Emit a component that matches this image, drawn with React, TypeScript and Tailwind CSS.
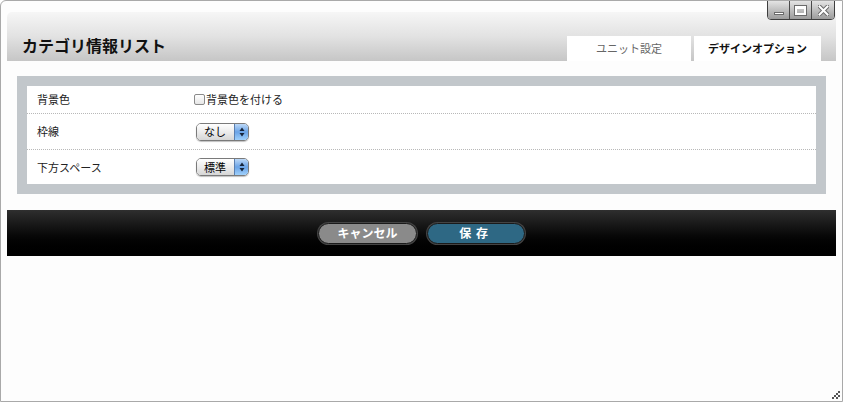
import React from 'react';

const font = { fontFamily: '"Noto Sans CJK JP", "Liberation Sans", sans-serif' };

function AquaSelect({ label }: { label: string }) {
  return (
    <div className="flex h-[18px] w-[53px] overflow-hidden rounded-[5px] border border-[#7a7a7a] shadow-[0_1px_1px_rgba(0,0,0,0.25)]">
      <div className="flex flex-1 items-center bg-gradient-to-b from-[#ffffff] via-[#ececec] to-[#d6d6d6] pl-[7px] text-[11px] leading-none text-black">
        {label}
      </div>
      <div className="flex w-[14px] flex-col items-center justify-center border-l border-[#5a7fb0] bg-gradient-to-b from-[#bcd8f7] via-[#6aa3e6] to-[#9fd0fb]">
        <svg width="6" height="10" viewBox="0 0 6 10">
          <path d="M3 0.5 L5.5 4 L0.5 4 Z" fill="#15243a" />
          <path d="M3 9.5 L5.5 6 L0.5 6 Z" fill="#15243a" />
        </svg>
      </div>
    </div>
  );
}

function WinButton({ children }: { children: React.ReactNode }) {
  return (
    <div className="flex h-[18px] w-[22px] items-center justify-center border-r border-[#4a4a4a] bg-gradient-to-b from-[#e4e4e4] to-[#9c9c9c] last:border-r-0">
      {children}
    </div>
  );
}

export default function App() {
  return (
    <div className="relative h-[402px] w-[843px] overflow-hidden rounded-tl-[6px] border border-[#a9a9a9] bg-[#fdfdfd]" style={font}>
      {/* window controls */}
      <div className="absolute right-[7px] top-[-1px] flex overflow-hidden rounded-b-[4px] border border-[#3e3e3e]">
        <WinButton>
          <div className="mt-[7px] h-[3px] w-[10px] border border-[#6b6b6b] bg-white" />
        </WinButton>
        <WinButton>
          <div className="h-[9px] w-[11px] border-2 border-t-[3px] border-white outline outline-1 outline-[#6b6b6b]" />
        </WinButton>
        <WinButton>
          <svg width="11" height="11" viewBox="0 0 11 11">
            <path d="M1.5 1.5 L9.5 9.5 M9.5 1.5 L1.5 9.5" stroke="#6b6b6b" strokeWidth="4" strokeLinecap="square" />
            <path d="M1.5 1.5 L9.5 9.5 M9.5 1.5 L1.5 9.5" stroke="#ffffff" strokeWidth="2" strokeLinecap="square" />
          </svg>
        </WinButton>
      </div>

      <div className="flex flex-col px-[6px] pt-[11px]">
        {/* header */}
        <div className="flex h-[49px] items-end justify-between rounded-tl-[5px] bg-gradient-to-b from-[#f6f6f6] via-[#e2e2e2] to-[#c6c6c6] pr-[15px]">
          <div className="self-center pl-[15px] pt-[16px] text-[16px] font-bold leading-none text-[#111]">
            カテゴリ情報リスト
          </div>
          <div className="flex gap-[3px]">
            <div className="flex h-[25px] w-[124px] items-center justify-center bg-white text-[11px] text-[#666]">
              ユニット設定
            </div>
            <div className="flex h-[25px] w-[127px] items-center justify-center bg-white text-[11px] font-bold text-[#111]">
              デザインオプション
            </div>
          </div>
        </div>

        {/* settings panel */}
        <div className="mx-[10px] mt-[15px] bg-[#c2c7cb] p-[10px]">
          <div className="flex flex-col bg-white text-[11px] text-[#222]">
            <div className="flex h-[28px] items-center border-b border-dotted border-[#b8b8b8] px-[10px]">
              <div className="w-[157px]">背景色</div>
              <label className="flex items-center">
                <span className="mr-[1px] h-[11px] w-[11px] rounded-[2px] border border-[#8a8a8a] bg-gradient-to-b from-white to-[#e6e6e6]" />
                背景色を付ける
              </label>
            </div>
            <div className="flex h-[36px] items-center border-b border-dotted border-[#b8b8b8] px-[10px]">
              <div className="w-[159px]">枠線</div>
              <AquaSelect label="なし" />
            </div>
            <div className="flex h-[34px] items-center px-[10px]">
              <div className="w-[159px]">下方スペース</div>
              <AquaSelect label="標準" />
            </div>
          </div>
        </div>

        {/* footer */}
        <div className="mt-[16px] flex h-[46px] items-center justify-center gap-[10px] bg-gradient-to-b from-[#2f2f2f] to-[#000000]">
          <button className="flex h-[21px] w-[99px] items-center justify-center rounded-full border border-[#1a1a1a] bg-[#8a8a8a] text-[12px] font-bold text-white shadow-[0_0_0_1px_#444]">
            キャンセル
          </button>
          <button className="flex h-[21px] w-[98px] items-center justify-center rounded-full border border-[#1a1a1a] bg-[#2e6884] text-[12px] font-bold tracking-[0.4em] text-white shadow-[0_0_0_1px_#444]">
            保存
          </button>
        </div>
      </div>

      {/* resize grip */}
      <svg className="absolute bottom-[2px] right-[2px]" width="8" height="8" viewBox="0 0 8 8">
        <rect x="6" y="0" width="2" height="2" fill="#555" />
        <rect x="4" y="2" width="2" height="2" fill="#555" />
        <rect x="6" y="4" width="2" height="2" fill="#555" />
        <rect x="2" y="4" width="2" height="2" fill="#555" />
        <rect x="0" y="6" width="2" height="2" fill="#555" />
        <rect x="4" y="6" width="2" height="2" fill="#555" />
      </svg>
    </div>
  );
}
